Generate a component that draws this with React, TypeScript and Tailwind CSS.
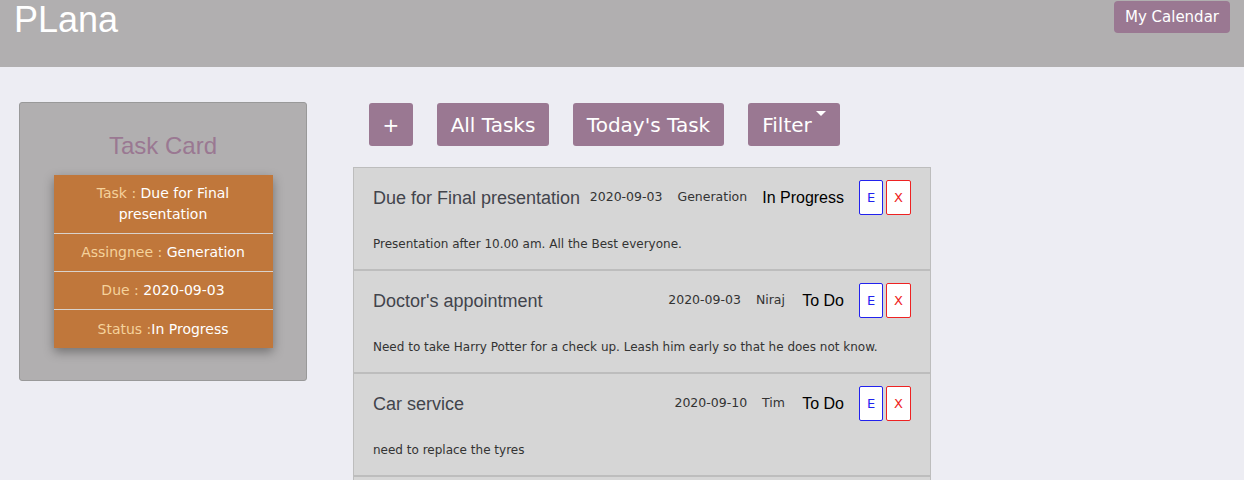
const tasks = [
  {
    title: "Due for Final presentation",
    due: "2020-09-03",
    who: "Generation",
    status: "In Progress",
    note: "Presentation after 10.00 am. All the Best everyone.",
  },
  {
    title: "Doctor's appointment",
    due: "2020-09-03",
    who: "Niraj",
    status: "To Do",
    note: "Need to take Harry Potter for a check up. Leash him early so that he does not know.",
  },
  {
    title: "Car service",
    due: "2020-09-10",
    who: "Tim",
    status: "To Do",
    note: "need to replace the tyres",
  },
  {
    title: "Groceries",
    due: "2020-09-11",
    who: "Tim",
    status: "To Do",
    note: "milk, eggs and bread",
  },
];

const sans = "font-['Liberation_Sans',Arial,sans-serif]";
const verdana = "font-['DejaVu_Sans',Verdana,sans-serif]";

function CardRow({ label, value }: { label: string; value: string }) {
  return (
    <div className="flex min-h-[38px] items-center justify-center border-b border-[#d9d2cc] px-3 py-[8px] text-center leading-[21px] last:border-b-0">
      <p>
        <span className="text-[#f5d29b]">{label}</span>
        <span className="text-white">{value}</span>
      </p>
    </div>
  );
}

export default function App() {
  return (
    <div className="min-h-[480px] bg-[#ededf3]">
      <header className="flex h-[67px] items-start justify-between bg-[#b1afb0] px-[14px]">
        <h1 className={`${sans} mt-[-1px] text-[36px] leading-[42px] text-white`}>PLana</h1>
        <button
          className={`${verdana} mt-[1px] h-[32px] w-[116px] rounded-[4px] bg-[#9a7892] text-[15px] text-white`}
        >
          My Calendar
        </button>
      </header>

      <main className="flex items-start pt-[35px]">
        <aside className="ml-[19px] flex h-[279px] w-[288px] flex-col items-center rounded-[3px] border border-[#999] bg-[#b1afb0]">
          <h2 className={`${sans} mt-[29px] text-[24px] leading-[28px] text-[#9a7892]`}>Task Card</h2>
          <div
            className={`${verdana} mt-[15px] w-[219px] bg-[#c0773b] text-[14px] shadow-[0_4px_10px_rgba(0,0,0,0.35)]`}
          >
            <CardRow label="Task : " value="Due for Final presentation" />
            <CardRow label="Assingnee : " value="Generation" />
            <CardRow label="Due : " value="2020-09-03" />
            <CardRow label="Status :" value="In Progress" />
          </div>
        </aside>

        <section className="ml-[46px] w-[578px]">
          <div className={`${verdana} ml-[16px] flex gap-[24px] pt-px text-[20px] text-white`}>
            <button className="h-[43px] w-[44px] rounded-[3px] bg-[#9a7892]">+</button>
            <button className="h-[43px] w-[112px] rounded-[3px] bg-[#9a7892]">All Tasks</button>
            <button className="h-[43px] w-[151px] rounded-[3px] bg-[#9a7892]">Today's Task</button>
            <button className="relative h-[43px] w-[92px] rounded-[3px] bg-[#9a7892] pr-[14px]">
              Filter
              <span className="absolute right-[14px] top-[8px] h-0 w-0 border-x-[5px] border-t-[5px] border-x-transparent border-t-white" />
            </button>
          </div>

          <div className="mt-[21px]">
            {tasks.map((t) => (
              <div key={t.title} className="border border-[#bdbdbd] bg-[#d6d6d6] px-[19px] pb-[17px] pt-[12px]">
                <div className="flex h-[35px] items-center whitespace-nowrap">
                  <span className={`${sans} grow pt-[2px] text-[18px] text-[#42444c]`}>{t.title}</span>
                  <span className={`${verdana} ml-[9px] text-[12.5px] text-[#333]`}>{t.due}</span>
                  <span className={`${verdana} ml-[15px] text-[12.5px] text-[#333]`}>{t.who}</span>
                  <span className={`${sans} ml-[15px] min-w-[44px] text-right text-[16px] text-black`}>
                    {t.status}
                  </span>
                  <div className={`${verdana} ml-[15px] flex gap-[3px] text-[13px]`}>
                    <button className="h-[35px] w-[24px] rounded-[2px] border border-[#2222ee] bg-white text-[#2222ee]">
                      E
                    </button>
                    <button className="h-[35px] w-[25px] rounded-[2px] border border-[#ee2222] bg-white text-[#ee2222]">
                      X
                    </button>
                  </div>
                </div>
                <p className={`${verdana} mt-[21px] text-[12px] leading-[16px] text-[#333]`}>{t.note}</p>
              </div>
            ))}
          </div>
        </section>
      </main>
    </div>
  );
}
